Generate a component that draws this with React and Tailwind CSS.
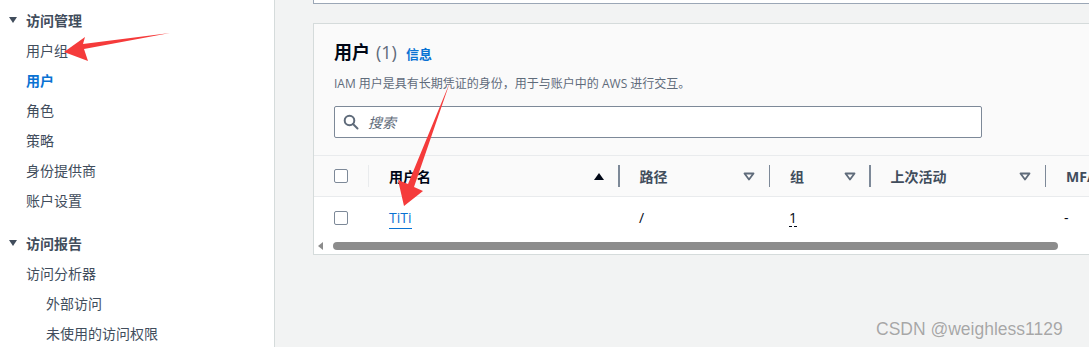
import React from "react";

const font = { fontFamily: '"Open Sans", "Noto Sans CJK SC", sans-serif' };

function Tri() {
  return (
    <svg width="10" height="10" viewBox="0 0 10 10" className="shrink-0">
      <path d="M1 2 L9 2 L5 8 Z" fill="#414d5c" />
    </svg>
  );
}

function DownOutline() {
  return (
    <svg width="12" height="9" viewBox="0 0 12 9" className="shrink-0">
      <path d="M1.5 1.5 L10.5 1.5 L6 7.5 Z" fill="none" stroke="#5f6b7a" strokeWidth="1.8" strokeLinejoin="round" />
    </svg>
  );
}

function UpFilled() {
  return (
    <svg width="12" height="9" viewBox="0 0 12 9" className="shrink-0">
      <path d="M1 8 L11 8 L6 1 Z" fill="#000716" />
    </svg>
  );
}

function Checkbox() {
  return <div className="w-[14px] h-[14px] border-[1.5px] border-[#7d8998] rounded-[2px] bg-white" />;
}

function Divider({ light }) {
  return <div className={`w-[1.5px] h-[22px] ${light ? "bg-[#e9ebed]" : "bg-[#7d8998]"}`} />;
}

export default function App() {
  const items = ["用户组", "用户", "角色", "策略", "身份提供商", "账户设置"];
  return (
    <div className="relative w-[1089px] h-[347px] overflow-hidden flex bg-[#f2f3f3]" style={font}>
      {/* Sidebar */}
      <div className="w-[275px] shrink-0 h-full bg-white border-r border-[#d5dbdb] pt-[5px] text-[14px] text-[#414d5c]">
        <div className="h-[30px] flex items-center pl-[8px] gap-[8px] font-bold">
          <Tri />
          <span>访问管理</span>
        </div>
        {items.map((t) => (
          <div
            key={t}
            className={`h-[30px] flex items-center pl-[26px] ${t === "用户" ? "text-[#0972d3] font-bold" : ""}`}
          >
            {t}
          </div>
        ))}
        <div className="h-[30px] mt-[13px] flex items-center pl-[8px] gap-[8px] font-bold">
          <Tri />
          <span>访问报告</span>
        </div>
        <div className="h-[30px] flex items-center pl-[26px]">访问分析器</div>
        <div className="h-[30px] flex items-center pl-[46px]">外部访问</div>
        <div className="h-[30px] flex items-center pl-[46px]">未使用的访问权限</div>
      </div>

      {/* Main */}
      <div className="flex-1 h-full overflow-hidden pl-[38px]">
        <div className="w-[820px] h-[4px] bg-white border-l border-b border-[#9ba7b6]" />
        <div className="mt-[19px] w-[820px] bg-[#fafafa] border border-[#d5dbdb] border-r-0">
          <div className="pl-[20px] pt-[15px]">
            <div className="flex items-baseline h-[24px]">
              <span className="text-[18px] font-bold text-[#000716]">用户</span>
              <span className="text-[18px] text-[#5f6b7a] ml-[6px]">(1)</span>
              <span className="text-[13px] font-bold text-[#0972d3] ml-[9px]">信息</span>
            </div>
            <div className="mt-[11px] text-[12px] text-[#5f6b7a] h-[20px] leading-[20px]">
              IAM 用户是具有长期凭证的身份，用于与账户中的 AWS 进行交互。
            </div>
            <div className="mt-[12px] w-[648px] h-[32px] bg-white border border-[#7d8998] rounded-[2px] flex items-center pl-[8px]">
              <svg width="16" height="16" viewBox="0 0 16 16">
                <circle cx="6.5" cy="6.5" r="4.8" fill="none" stroke="#5f6b7a" strokeWidth="2" />
                <path d="M10 10 L14.5 14.5" stroke="#5f6b7a" strokeWidth="2" strokeLinecap="round" />
              </svg>
              <span className="ml-[9px] text-[14px] italic text-[#5f6b7a]">搜索</span>
            </div>
          </div>

          {/* Table header */}
          <div className="mt-[17px] border-t border-[#e9ebed] h-[41px] flex items-center text-[14px] font-bold text-[#414d5c]">
            <div className="w-[55px] pl-[20px] flex items-center justify-between">
              <Checkbox />
              <Divider light />
            </div>
            <div className="w-[249px] pl-[20px] pr-[13px] flex items-center justify-between">
              <span className="text-[#000716]">用户名</span>
              <UpFilled />
            </div>
            <Divider />
            <div className="w-[149px] pl-[20px] pr-[14px] flex items-center justify-between">
              <span>路径</span>
              <DownOutline />
            </div>
            <Divider />
            <div className="w-[99px] pl-[20px] pr-[13px] flex items-center justify-between">
              <span>组</span>
              <DownOutline />
            </div>
            <Divider />
            <div className="w-[174px] pl-[20px] pr-[14px] flex items-center justify-between">
              <span>上次活动</span>
              <DownOutline />
            </div>
            <Divider />
            <div className="pl-[20px] whitespace-nowrap">MFA</div>
          </div>

          {/* Data row + scrollbar */}
          <div className="bg-white border-t border-[#e9ebed]">
            <div className="h-[41px] flex items-center text-[14px] text-[#000716]">
              <div className="w-[55px] pl-[20px]">
                <Checkbox />
              </div>
              <div className="w-[250px] pl-[20px]">
                <span className="text-[#0972d3] border-b border-[#0972d3] pb-[1px]">TiTi</span>
              </div>
              <div className="w-[150px] pl-[20px]">/</div>
              <div className="w-[100px] pl-[20px]">
                <span className="border-b border-dashed border-[#000716] leading-[16px] inline-block">1</span>
              </div>
              <div className="w-[175px]" />
              <div className="pl-[20px]">-</div>
            </div>
            <div className="h-[16px] flex items-center pl-[4px]">
              <svg width="6" height="8" viewBox="0 0 6 8">
                <path d="M5 0 L0 4 L5 8 Z" fill="#8c8c8c" />
              </svg>
              <div className="ml-[9px] w-[725px] h-[8px] rounded-full bg-[#8c8c8c]" />
            </div>
          </div>
        </div>
      </div>

      {/* Red arrows overlay */}
      <svg className="absolute left-0 top-0 pointer-events-none" width="1089" height="347">
        <polygon points="64,52 85,37 83,44 170,33 84,49 88,61" fill="#f53b3b" />
        <polygon points="404,206 398,180 408,184 450,82 414,187 423,191" fill="#f53b3b" />
      </svg>

      {/* Watermark */}
      <div
        className="absolute left-[876px] top-[316px] text-[17.5px] text-[#a7a7a7]"
        style={{ fontFamily: '"Liberation Sans", Arial, sans-serif', textShadow: "0 0 1px #fff" }}
      >
        CSDN @weighless1129
      </div>
    </div>
  );
}
